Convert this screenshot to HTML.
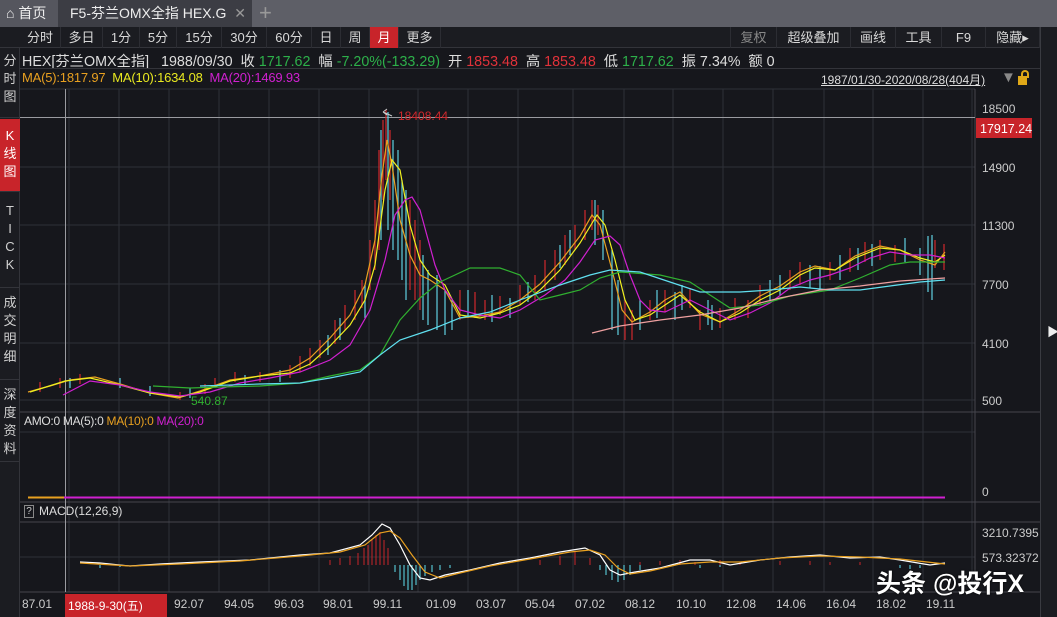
<!DOCTYPE html>
<html><head><meta charset="utf-8">
<style>
*{margin:0;padding:0;box-sizing:border-box}
body{width:1057px;height:617px;background:#16171c;overflow:hidden;position:relative;font-family:"Liberation Sans","Noto Sans CJK SC",sans-serif;color:#d0d0d0;font-size:13px}
.abs{position:absolute;white-space:nowrap}
.tb{position:absolute;top:27px;height:21px;line-height:21px;text-align:center;color:#d8d8d8;font-size:13px;border-right:1px solid #2c2d33}
.side{position:absolute;left:0;width:20px;text-align:center;font-size:13px;line-height:18px;color:#d0d0d0;border-bottom:1px solid #33343a}
</style></head><body>
<div class="abs" style="left:0;top:0;width:1057px;height:27px;background:#5e5f67"></div>
<div class="abs" style="left:0;top:0;width:58px;height:27px;background:#55565e;line-height:27px;padding-left:6px;color:#eee;font-size:14px">⌂ 首页</div>
<div class="abs" style="left:58px;top:0;width:194px;height:27px;background:#3c3d44;line-height:27px;padding-left:12px;color:#eee;font-size:14px">F5-芬兰OMX全指 HEX.G <span style="color:#999;margin-left:4px">✕</span></div>
<div class="abs" style="left:259px;top:0;line-height:25px;color:#999;font-size:22px">+</div>
<div class="abs" style="left:0;top:27px;width:1040px;height:21px;background:#1b1c21;border-bottom:1px solid #33343a"></div>
<div class="tb" style="left:20px;width:41px">分时</div>
<div class="tb" style="left:61px;width:42px">多日</div>
<div class="tb" style="left:103px;width:37px">1分</div>
<div class="tb" style="left:140px;width:37px">5分</div>
<div class="tb" style="left:177px;width:45px">15分</div>
<div class="tb" style="left:222px;width:45px">30分</div>
<div class="tb" style="left:267px;width:45px">60分</div>
<div class="tb" style="left:312px;width:29px">日</div>
<div class="tb" style="left:341px;width:29px">周</div>
<div class="tb" style="left:370px;width:29px;background:#c8242a;color:#fff">月</div>
<div class="tb" style="left:399px;width:42px">更多</div>
<div class="tb" style="left:730px;width:47px;color:#888;border-left:1px solid #2c2d33">复权</div>
<div class="tb" style="left:777px;width:74px">超级叠加</div>
<div class="tb" style="left:851px;width:45px">画线</div>
<div class="tb" style="left:896px;width:46px">工具</div>
<div class="tb" style="left:942px;width:44px">F9</div>
<div class="tb" style="left:986px;width:54px">隐藏▸</div>
<div class="abs" style="left:1040px;top:27px;width:17px;height:590px;background:#1b1c21;border-left:1px solid #3a3b41"></div>
<div class="abs" style="left:1047px;top:323px;color:#eee;font-size:12px">▶</div>
<div class="abs" style="left:0;top:48px;width:20px;height:569px;background:#1b1c21;border-right:1px solid #33343a"></div>
<div class="side" style="top:52px;height:66px">分<br>时<br>图</div>
<div class="side" style="top:119px;height:73px;background:#c8242a;color:#fff;padding-top:8px">K<br>线<br>图</div>
<div class="side" style="top:200px;height:88px;padding-top:2px">T<br>I<br>C<br>K</div>
<div class="side" style="top:292px;height:88px;padding-top:2px">成<br>交<br>明<br>细</div>
<div class="side" style="top:386px;height:76px">深<br>度<br>资<br>料</div>
<div class="abs" style="left:22px;top:50px;font-size:14.3px;color:#ddd">HEX[芬兰OMX全指]&nbsp;&nbsp;&nbsp;1988/09/30&nbsp; 收 <span style="color:#2db04a">1717.62</span>&nbsp;&nbsp;幅 <span style="color:#2db04a">-7.20%(-133.29)</span>&nbsp;&nbsp;开 <span style="color:#e0323a">1853.48</span>&nbsp;&nbsp;高 <span style="color:#e0323a">1853.48</span>&nbsp;&nbsp;低 <span style="color:#2db04a">1717.62</span>&nbsp;&nbsp;振 7.34%&nbsp;&nbsp;额 0</div>
<div class="abs" style="left:20px;top:68px;width:1020px;border-top:1px solid #33343a"></div>
<div class="abs" style="left:22px;top:70px;font-size:13px;letter-spacing:-0.2px"><span style="color:#e8a020">MA(5):1817.97</span>&nbsp; <span style="color:#e8e820">MA(10):1634.08</span>&nbsp; <span style="color:#d020d0">MA(20):1469.93</span></div>
<div class="abs" style="left:821px;top:71px;font-size:12px;color:#ddd;text-decoration:underline">1987/01/30-2020/08/28(404月)</div>
<div class="abs" style="left:1001px;top:69px;color:#888;font-size:15px">▼</div>
<div class="abs" style="left:1018px;top:76px;width:9px;height:9px;background:#e0a818"></div>
<div class="abs" style="left:1021px;top:70px;width:8px;height:8px;border:2px solid #e0a818;border-bottom:none;border-radius:4px 4px 0 0"></div>
<svg class="abs" style="left:0;top:0" width="1057" height="617">
<g stroke="#2e3038" stroke-width="1">
<path d="M69 89V592M119 89V592M169 89V592M219 89V592M269 89V592M319 89V592M369 89V592M418 89V592M468 89V592M518 89V592M573 89V592M624 89V592M673 89V592M723 89V592M773 89V592M824 89V592M873 89V592M923 89V592M972 89V592"/>
<path d="M20 89H975M20 167H975M20 225H975M20 284H975M20 343H975M20 400H975M20 432H975M20 557H975"/>
</g>
<path d="M20 412H1040M20 502H1040M20 522H1040M20 592H1040M975 89V592" stroke="#45464d"/>
<path d="M20 117.5H975" stroke="#9a9ba0"/>
<path d="M65.5 89V592" stroke="#9a9ba0"/>
<g stroke="#d0282c" stroke-width="1.2">
<path d="M40 382V392M60 378V388M80 374V384M180 392V400M205 384V394M215 378V388M235 372V382M260 372V382M290 365V378M300 356V372M310 348V366M320 340V358M335 320V344M345 305V330M355 290V320M362 280V308M370 240V290M375 200V270M379 150V250M383 120V200M386 110V180M390 130V200M410 200V290M415 220V300M420 240V310M460 290V320M475 292V318M485 300V320M500 296V315M520 285V305M535 275V300M545 260V290M555 250V280M565 235V265M575 225V250M585 210V240M592 200V230M598 205V235M625 300V340M632 310V340M650 300V320M665 290V312M690 288V308M700 310V330M720 308V328M735 298V320M748 300V318M760 285V305M790 270V290M800 262V285M830 262V280M850 248V272M865 242V262M880 240V260M895 245V262M935 240V268M944 244V270"/>
</g>
<g stroke="#60d0e0" stroke-width="1.2">
<path d="M70 378V388M120 378V388M150 386V396M190 388V398M245 375V385M280 370V382M328 335V355M340 318V340M365 285V318M381 130V240M388 112V230M393 140V250M398 150V260M402 180V280M406 190V300M423 255V320M428 270V325M437 275V330M445 290V335M452 300V330M468 290V318M492 295V322M510 298V318M528 282V302M560 245V268M570 230V255M595 200V245M603 210V260M612 250V330M618 280V335M640 300V330M657 290V318M675 292V320M682 285V310M708 300V325M712 305V330M770 280V300M780 275V295M810 265V288M820 266V290M840 255V280M858 248V270M872 244V266M905 238V262M920 248V275M928 236V292M932 235V300"/>
</g>
<g fill="none" stroke-width="1.2">
<polyline stroke="#e8a020" points="28,392 50,386 70,380 95,377 120,384 150,393 178,398 200,391 230,380 260,376 290,370 310,358 330,338 350,315 365,285 375,240 382,175 387,140 392,165 400,220 410,255 420,275 430,280 445,290 460,318 480,316 500,312 520,300 540,284 560,262 580,236 592,215 600,225 612,270 622,310 632,322 650,312 665,300 680,292 700,314 720,322 740,310 760,296 780,286 800,272 815,266 835,270 855,256 880,246 900,250 920,260 935,265 945,252"/>
<polyline stroke="#f0f020" points="30,392 65,381 90,378 120,385 150,393 180,397 200,392 230,381 260,376 290,373 310,364 330,346 350,325 365,300 375,265 385,190 392,160 400,170 410,225 420,260 430,275 445,285 460,315 480,318 500,313 520,305 540,290 560,270 580,243 597,215 605,225 615,260 625,300 635,320 650,315 665,305 680,295 700,312 720,322 740,313 760,300 780,290 800,275 815,268 835,270 855,258 880,248 900,250 920,258 935,262 945,255"/>
<polyline stroke="#d020d0" points="63,395 90,381 120,385 150,392 180,396 210,392 240,383 270,378 300,372 330,360 350,345 370,310 385,260 395,215 405,200 412,197 420,210 435,265 445,290 460,310 480,315 500,318 520,310 545,295 565,280 580,262 595,240 610,236 620,245 630,275 640,300 650,310 665,312 690,300 710,310 730,320 750,313 770,303 790,288 810,280 830,275 850,268 870,258 890,252 910,255 930,255 945,258"/>
<polyline stroke="#30b030" points="153,386 190,388 220,387 260,386 300,383 330,376 360,370 380,355 400,320 420,298 440,282 470,268 500,268 520,275 540,300 560,295 580,290 600,278 620,272 660,275 690,282 710,295 730,308 760,305 790,296 830,290 860,278 890,265 910,262 935,262 945,262"/>
<polyline stroke="#60e0f0" points="200,386 260,384 300,383 330,378 360,372 380,355 400,340 430,330 460,318 490,312 520,300 560,285 590,275 610,270 640,272 670,282 700,292 740,292 770,290 800,287 830,290 860,290 890,286 920,282 945,280"/>
<polyline stroke="#f0a0a0" points="592,333 620,326 660,320 700,315 740,308 780,298 820,290 860,286 900,281 945,278"/>
</g>
<text x="398" y="120" fill="#d0282c" font-size="12" font-family="Liberation Sans">18408.44</text>
<path d="M383 112L392 116M383 112l4 -3M383 112l4 3" stroke="#ccc" fill="none"/>
<text x="191" y="405" fill="#30b030" font-size="12" font-family="Liberation Sans">540.87</text>
<g fill="#ccc" font-size="12" font-family="Liberation Sans">
<text x="982" y="113">18500</text><text x="982" y="172">14900</text><text x="982" y="230">11300</text><text x="982" y="289">7700</text><text x="982" y="348">4100</text><text x="982" y="405">500</text>
<text x="982" y="496">0</text><text x="982" y="537">3210.7395</text><text x="982" y="562">573.32372</text>
</g>
<rect x="976" y="118" width="56" height="20" fill="#c8242a"/>
<text x="980" y="133" fill="#fff" font-size="12.5" font-family="Liberation Sans">17917.24</text>
<path d="M28 497.5H64" stroke="#e8a020" stroke-width="2"/>
<path d="M64 497.5H945" stroke="#d020d0" stroke-width="2"/>
<g stroke="#c8242a" stroke-width="1"><path d="M330 565V560M340 565V558M350 565V556M358 565V553M364 565V548M368 565V545M372 565V540M376 565V535M380 565V532M384 565V540M388 565V548M540 565V560M560 565V556M575 565V552M590 565V558M640 565V562M660 565V561M680 565V560M695 565V562M720 565V560M740 565V562M780 565V561M810 565V561M830 565V562M860 565V562"/></g>
<g stroke="#60e0f0" stroke-width="1"><path d="M395 565V572M400 565V580M404 565V586M408 565V590M412 565V590M416 565V585M420 565V580M425 565V576M432 565V572M440 565V570M450 565V568M600 565V570M606 565V575M612 565V580M618 565V582M624 565V580M630 565V575M640 565V570M700 565V568M720 565V567M900 565V568M910 565V569M920 565V568M100 565V568M120 565V567"/></g>
<g fill="none" stroke-width="1.2">
<polyline stroke="#fff" points="80,562 100,563 130,566 160,564 200,562 250,560 300,555 330,553 360,545 372,535 382,524 390,528 400,545 410,565 420,578 430,580 445,575 470,570 500,563 530,558 560,552 585,548 600,555 610,570 620,575 635,572 660,568 690,560 710,560 730,565 760,560 790,557 820,555 850,558 880,557 900,560 930,565 945,563"/>
<polyline stroke="#e8a020" points="80,563 130,566 180,564 240,561 300,556 340,552 365,545 380,533 390,531 400,538 412,555 425,572 440,578 460,573 490,566 530,559 570,552 590,550 605,555 618,568 630,574 650,571 680,564 710,562 740,562 780,558 820,556 860,557 900,559 945,564"/>
</g>
</svg>
<div class="abs" style="left:24px;top:414px;font-size:12px;letter-spacing:-0.3px"><span style="color:#ddd">AMO:0</span> <span style="color:#ddd">MA(5):0</span> <span style="color:#e8a020">MA(10):0</span> <span style="color:#d020d0">MA(20):0</span></div>
<div class="abs" style="left:24px;top:505px;width:10px;height:13px;border:1px solid #888;font-size:10px;line-height:11px;text-align:center;color:#ccc">?</div>
<div class="abs" style="left:39px;top:504px;font-size:12px;color:#ddd">MACD(12,26,9)</div>
<div class="abs" style="left:65px;top:594px;width:102px;height:23px;background:#c8242a"></div>
<div class="abs" style="left:0;top:597px;width:1000px;font-size:12px;color:#ccc;font-family:'Liberation Sans','Noto Sans CJK SC',sans-serif">
<span class="abs" style="left:22px">87.01</span><span class="abs" style="left:68px;color:#fff">1988-9-30(五)</span><span class="abs" style="left:174px">92.07</span><span class="abs" style="left:224px">94.05</span><span class="abs" style="left:274px">96.03</span><span class="abs" style="left:323px">98.01</span><span class="abs" style="left:373px">99.11</span><span class="abs" style="left:426px">01.09</span><span class="abs" style="left:476px">03.07</span><span class="abs" style="left:525px">05.04</span><span class="abs" style="left:575px">07.02</span><span class="abs" style="left:625px">08.12</span><span class="abs" style="left:676px">10.10</span><span class="abs" style="left:726px">12.08</span><span class="abs" style="left:776px">14.06</span><span class="abs" style="left:826px">16.04</span><span class="abs" style="left:876px">18.02</span><span class="abs" style="left:926px">19.11</span>
</div>
<div class="abs" style="left:876px;top:564px;font-size:25px;color:#fff;font-weight:bold;text-shadow:0 0 2px #000">头条 @投行X</div>
</body></html>
